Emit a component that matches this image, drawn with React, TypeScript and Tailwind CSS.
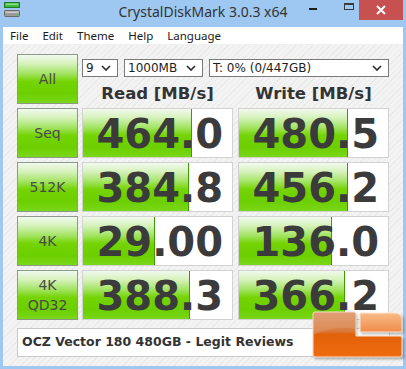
import React from "react";

const GREEN =
  "bg-[linear-gradient(to_bottom,#f2f9ee_0%,#d6f2bc_18%,#a4e466_38%,#74d404_55%,#6ccf00_80%,#7ad71a_100%)]";

function Chevron() {
  return (
    <svg width="10" height="6" viewBox="0 0 10 6" className="shrink-0">
      <polyline points="1,1 5,5 9,1" fill="none" stroke="#2a2a2a" strokeWidth="1.6" />
    </svg>
  );
}

function Drop({ w, text }: { w: string; text: string }) {
  return (
    <div
      className={`${w} h-[18px] bg-white border border-[#7a7a7a] flex items-center justify-between pl-[3px] pr-[6px] text-[12px] leading-none text-[#1e1e1e] font-['DejaVu_Sans',sans-serif]`}
    >
      <span>{text}</span>
      <Chevron />
    </div>
  );
}

function Label({ children }: { children: React.ReactNode }) {
  return (
    <div
      className={`w-[61px] h-[50px] shrink-0 border border-[#8c9a8c] ${GREEN} flex flex-col items-center justify-center text-[14px] leading-[20px] text-[#4a4a4a] font-['DejaVu_Sans',sans-serif]`}
    >
      {children}
    </div>
  );
}

function Value({ v }: { v: string }) {
  const n = parseFloat(v);
  const w = Math.round(27.1 + 30.7 * Math.log10(n));
  return (
    <div className="relative w-[151px] h-[50px] shrink-0 bg-white border border-[#d2d2d2]">
      <div
        className={`absolute left-0 top-0 bottom-0 ${GREEN} border-r border-[#3f9a00]`}
        style={{ width: w }}
      />
      <div className="relative h-full flex items-center justify-end pr-[9px] pt-[2px] text-[40px] leading-none font-bold text-[#3b3b3b] font-['DejaVu_Sans',sans-serif]">
        {v}
      </div>
    </div>
  );
}

function AppIcon() {
  return (
    <svg width="18" height="17" viewBox="0 0 18 17">
      <rect x="0.5" y="1.5" width="15" height="5" fill="#3dbb3d" stroke="#237a23" />
      <rect x="2" y="2.5" width="12" height="1.5" fill="#8fe08f" />
      <rect x="0.5" y="9.5" width="15" height="6" rx="1" fill="#9a9a9a" stroke="#6a6a6a" />
      <rect x="1.5" y="10.5" width="13" height="1.5" fill="#d0d0d0" />
      <rect x="11" y="13" width="3" height="1.5" fill="#40d040" />
    </svg>
  );
}

function Logo() {
  return (
    <svg
      width="98"
      height="54"
      viewBox="0 0 98 54"
      className="absolute left-[310px] top-[309px]"
    >
      <defs>
        <linearGradient id="big" x1="0" y1="0" x2="0" y2="1">
          <stop offset="0" stopColor="#dc9365" />
          <stop offset="0.42" stopColor="#d97b3e" />
          <stop offset="0.5" stopColor="#e26008" />
          <stop offset="1" stopColor="#f06c10" />
        </linearGradient>
        <linearGradient id="small" x1="0" y1="0" x2="0" y2="1">
          <stop offset="0" stopColor="#f8bb8a" />
          <stop offset="1" stopColor="#f18c48" />
        </linearGradient>
        <filter id="sh" x="-10%" y="-10%" width="130%" height="140%">
          <feGaussianBlur stdDeviation="1.5" />
        </filter>
      </defs>
      <path
        d="M6 5 H47 V29 H94 V50 H6 Q4 50 4 48 V7 Q4 5 6 5 Z"
        fill="rgba(0,0,0,0.35)"
        filter="url(#sh)"
      />
      <path
        d="M51 6 H88 Q94 6 94 12 V25 H51 Z"
        fill="rgba(0,0,0,0.3)"
        filter="url(#sh)"
      />
      <path
        d="M5 3 H44 Q46 3 46 5 V27 H90 Q92 27 92 29 V46 Q92 48 90 48 H5 Q3 48 3 46 V5 Q3 3 5 3 Z"
        fill="url(#big)"
        stroke="#fbe2cc"
        strokeWidth="1"
      />
      <path d="M4 4 H45 V20 Q25 16 4 26 Z" fill="rgba(255,255,255,0.12)" />
      <path
        d="M50 4 H85 Q92 4 92 11 V23 H50 Z"
        fill="url(#small)"
        stroke="#fde6d2"
        strokeWidth="1"
      />
    </svg>
  );
}

export default function App() {
  const rows: [React.ReactNode, string, string][] = [
    ["Seq", "464.0", "480.5"],
    ["512K", "384.8", "456.2"],
    ["4K", "29.00", "136.0"],
    [
      <>
        <span>4K</span>
        <span>QD32</span>
      </>,
      "388.3",
      "366.2",
    ],
  ];
  return (
    <div className="relative w-[406px] h-[369px] overflow-hidden bg-[#9ec8f1] flex flex-col">
      {/* title bar */}
      <div className="h-[27px] shrink-0 grid grid-cols-[1fr_auto_1fr]">
        <div className="pl-[4px] pt-[1px]">
          <AppIcon />
        </div>
        <div className="pt-[2px] text-[14px] leading-[20px] text-[#333] font-['Noto_Sans',sans-serif]">
          CrystalDiskMark 3.0.3 x64
        </div>
        <div className="flex justify-end items-start pr-[3px]">
          <div className="w-[18px] h-[20px] flex items-start justify-center pt-[8px] mr-[18px]">
            <div className="w-[8px] h-[2px] bg-[#1e1e1e]" />
          </div>
          <div className="w-[18px] h-[20px] flex justify-center pt-[3px] mr-[1px]">
            <div className="w-[10px] h-[7px] border border-t-2 border-[#3a3a3a]" />
          </div>
          <div className="w-[44px] h-[20px] bg-[#c75050] flex items-center justify-center">
            <svg width="10" height="10" viewBox="0 0 10 10">
              <path d="M1 1 L9 9 M9 1 L1 9" stroke="#fff" strokeWidth="2" />
            </svg>
          </div>
        </div>
      </div>
      {/* frame */}
      <div className="flex-1 flex flex-col px-[3px] pb-[3px]">
        <div className="h-[18px] shrink-0 bg-white flex items-center pl-[0px] text-[11.5px] leading-none text-[#1a1a1a] font-['Noto_Sans',sans-serif] border-b border-[#f0f0f0]">
          {["File", "Edit", "Theme", "Help", "Language"].map((m) => (
            <span key={m} className="px-[7px]">
              {m}
            </span>
          ))}
        </div>
        <div className="flex-1 pl-[14px] pt-[9px] flex flex-col bg-[#efefef] bg-[repeating-linear-gradient(135deg,#f3f3f3_0px,#f3f3f3_3px,#eaeaea_3px,#eaeaea_4px)]">
          <div className="flex flex-col gap-[4px]">
            <div className="flex gap-[4px] h-[50px]">
              <Label>All</Label>
              <div className="w-[307px] flex flex-col">
                <div className="mt-[5px] flex gap-[6px]">
                  <Drop w="w-[36px]" text="9" />
                  <Drop w="w-[79px]" text="1000MB" />
                  <Drop w="w-[180px]" text="T: 0% (0/447GB)" />
                </div>
                <div className="flex-1 flex gap-[5px] items-end">
                  <div className="w-[151px] text-center text-[16.5px] leading-[20px] font-bold text-[#333] font-['DejaVu_Sans',sans-serif]">
                    Read [MB/s]
                  </div>
                  <div className="w-[151px] text-center text-[16.5px] leading-[20px] font-bold text-[#333] font-['DejaVu_Sans',sans-serif]">
                    Write [MB/s]
                  </div>
                </div>
              </div>
            </div>
            {rows.map(([l, r, w], i) => (
              <div key={i} className="flex gap-[4px] h-[50px]">
                <Label>{l}</Label>
                <div className="flex gap-[5px]">
                  <Value v={r} />
                  <Value v={w} />
                </div>
              </div>
            ))}
          </div>
          <div className="mt-[8px] w-[373px] h-[29px] bg-white border border-[#c9c9c9] flex items-center pl-[4px] text-[12.5px] font-bold text-[#333] font-['DejaVu_Sans',sans-serif]">
            OCZ Vector 180 480GB - Legit Reviews
          </div>
        </div>
      </div>
      <Logo />
    </div>
  );
}
